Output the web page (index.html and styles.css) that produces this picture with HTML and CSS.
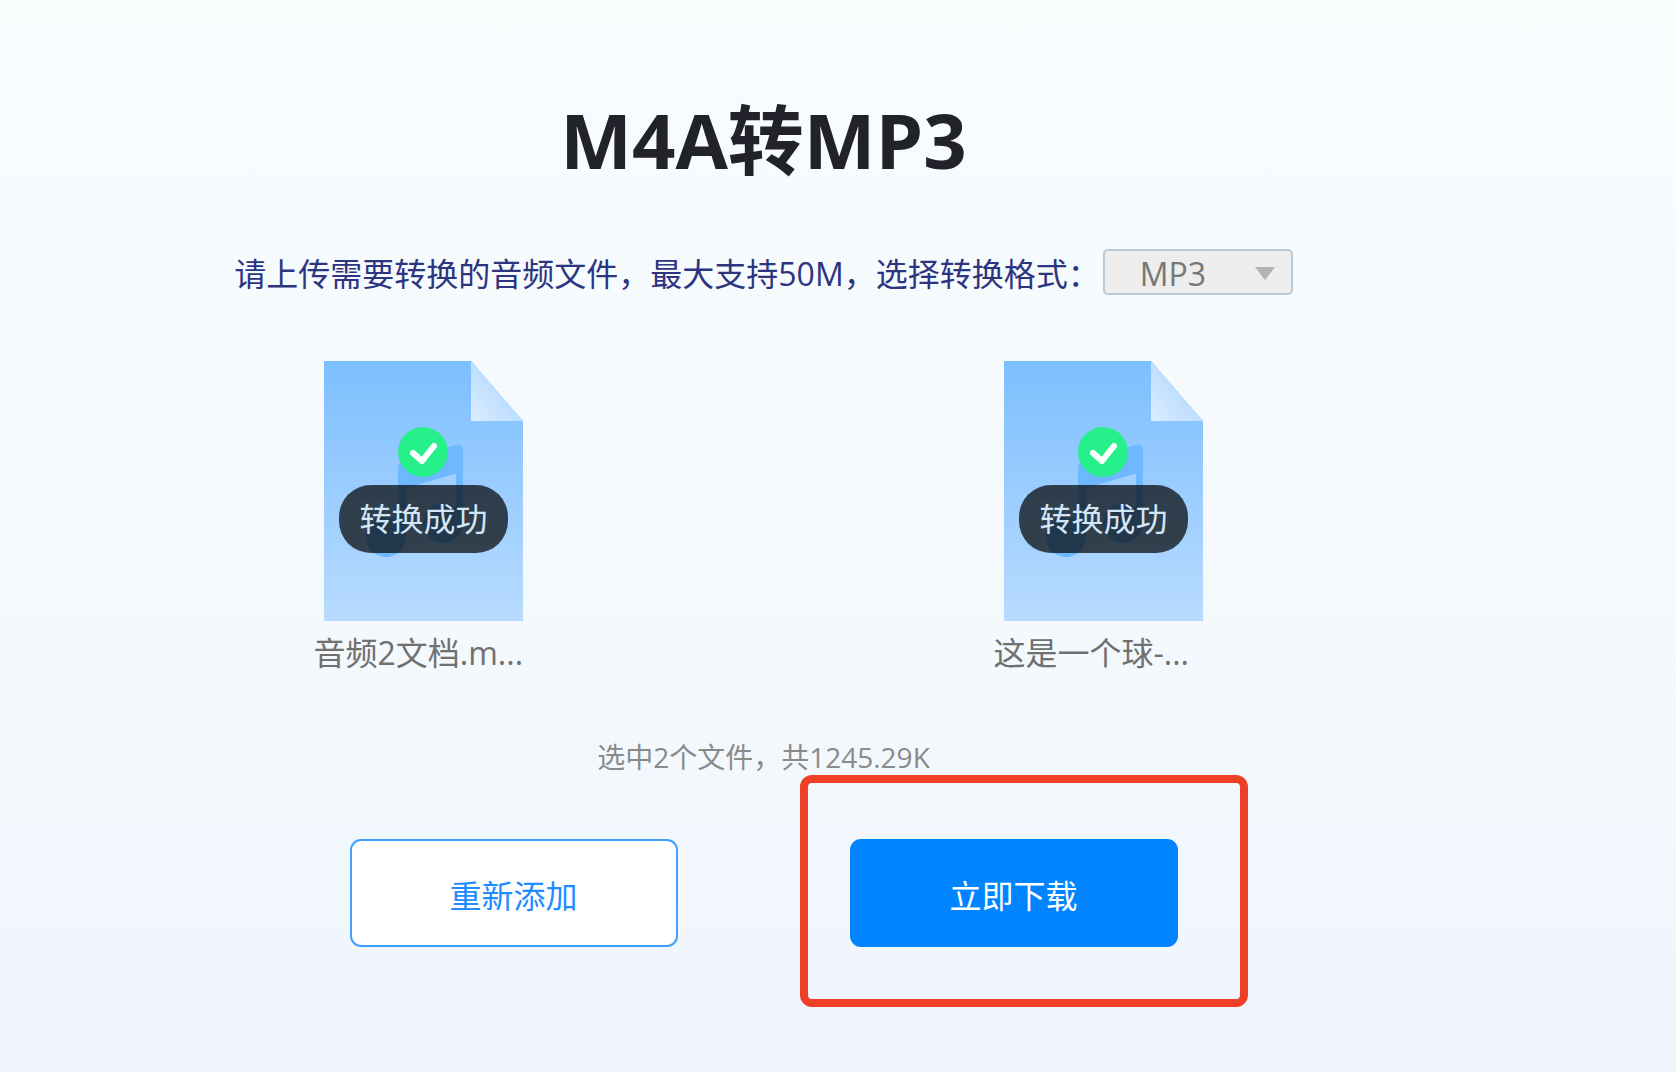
FILE: index.html
```html
<!DOCTYPE html>
<html lang="zh-CN">
<head>
<meta charset="utf-8">
<meta name="viewport" content="width=device-width, initial-scale=1">
<title>M4A转MP3</title>
<link rel="stylesheet" href="styles.css">
</head>
<body>
<svg class="defs" width="0" height="0" aria-hidden="true">
  <defs>
    <linearGradient id="sheet" x1="0" y1="0" x2="0" y2="1">
      <stop offset="0" stop-color="#7dbfff"/>
      <stop offset="1" stop-color="#b8dbff"/>
    </linearGradient>
    <linearGradient id="fold" x1="0" y1="1" x2="0.6" y2="0.4">
      <stop offset="0" stop-color="#dcedff"/>
      <stop offset="1" stop-color="#b8dbff"/>
    </linearGradient>
    <symbol id="audio-file" viewBox="0 0 199 260">
      <path fill="url(#sheet)" d="M0 0H147L199 60V260H0Z"/>
      <path fill="url(#fold)" d="M147 0L199 60H147Z"/>
      <path fill="#6db8ff" d="M74 107Q74 102 79 100L131 84Q139 82 139 90V162A20 20 0 1 1 132 147V117Q132 112 127 114L86 126Q82 127 82 132V176A20 20 0 1 1 74 160Z"/>
      <path fill="#9fd0ff" d="M94 124L130 113Q132 112 132 115V124Z"/>
      <circle cx="99" cy="91" r="25" fill="#26f08a"/>
      <path fill="none" stroke="#fff" stroke-width="6" stroke-linecap="round" stroke-linejoin="round" d="M89 92L98 100L110 85"/>
    </symbol>
  </defs>
</svg>
<main class="converter">
  <h1 class="title">M4A转MP3</h1>
  <div class="format">
    <label class="format-label" for="format">请上传需要转换的音频文件，最大支持50M，选择转换格式：</label>
    <div class="select-box">
      <select class="select" id="format" disabled>
        <option>MP3</option>
      </select>
    </div>
  </div>
  <ul class="files">
    <li class="file">
      <div class="preview">
        <svg class="sheet" aria-hidden="true"><use href="#audio-file"/></svg>
        <span class="status">转换成功</span>
      </div>
      <p class="name">音频2文档.m...</p>
    </li>
    <li class="file">
      <div class="preview">
        <svg class="sheet" aria-hidden="true"><use href="#audio-file"/></svg>
        <span class="status">转换成功</span>
      </div>
      <p class="name">这是一个球-...</p>
    </li>
  </ul>
  <p class="summary">选中2个文件，共1245.29K</p>
  <div class="actions">
    <button class="button" type="button">重新添加</button>
    <div class="highlight">
      <button class="button button-primary" type="button">立即下载</button>
    </div>
  </div>
</main>
</body>
</html>
```
FILE: styles.css
```css
* {
  box-sizing: border-box;
}

body {
  margin: 0;
  min-height: 100vh;
  background: linear-gradient(#f8fcfd, #f3f8fd 70%, #f0f5fe);
  font-family: "Open Sans", "Noto Sans CJK SC", sans-serif;
  font-size: 32px;
  line-height: 40px;
}

.defs {
  position: absolute;
}

.converter {
  display: flex;
  flex-direction: column;
  align-items: center;
  padding: 90px 149px 64px 0;
}

.title {
  margin: 0 0 59px;
  color: #22222a;
  font-size: 76px;
  font-weight: 700;
  line-height: 100px;
}

.format {
  display: flex;
  align-items: center;
  gap: 3px;
  height: 46px;
  color: #2d3480;
}

.format-label {
  padding-top: 4px;
  white-space: nowrap;
}

.select-box {
  position: relative;
}

.select-box::after {
  content: "";
  position: absolute;
  top: 18px;
  right: 18px;
  border: 10px solid transparent;
  border-top: 13px solid #b3b3b3;
  border-bottom: 0;
  pointer-events: none;
}

.select {
  display: block;
  width: 190px;
  height: 46px;
  margin: 0;
  padding: 4px 35px 0;
  appearance: none;
  border: 2px solid #b9c9d8;
  border-radius: 5px;
  background: #ededed;
  color: #777;
  font: inherit;
  line-height: 38px;
  opacity: 1;
}

.files {
  display: grid;
  grid-template-columns: 1fr 1fr;
  justify-items: center;
  width: 100%;
  max-width: 1360px;
  margin: 66px 0 64px;
  padding: 0;
  list-style: none;
}

.file {
  width: 220px;
}

.preview {
  display: grid;
  justify-items: center;
}

.sheet {
  grid-area: 1 / 1;
  width: 199px;
  height: 260px;
}

.status {
  grid-area: 1 / 1;
  align-self: start;
  margin-top: 124px;
  padding: 14px 20px;
  border-radius: 32px;
  background: rgba(0, 0, 0, 0.7);
  color: #d3e6f8;
}

.name {
  margin: 12px 0 0;
  color: #707070;
  white-space: nowrap;
}

.summary {
  margin: 0 0 62px;
  color: #8a8a8a;
  font-size: 28px;
}

.actions {
  display: flex;
  gap: 172px;
}

.highlight {
  position: relative;
}

.highlight::after {
  content: "";
  position: absolute;
  inset: -64px -70px -60px -50px;
  border: 8px solid #ee4026;
  border-radius: 12px;
  pointer-events: none;
}

.button {
  display: block;
  width: 328px;
  height: 108px;
  padding: 6px 0 0;
  border: 2px solid #3ea0ff;
  border-radius: 11px;
  background: #fff;
  color: #1f8cff;
  font: inherit;
}

.button-primary {
  border-color: #0084ff;
  background: #0084ff;
  color: #fff;
}
```
